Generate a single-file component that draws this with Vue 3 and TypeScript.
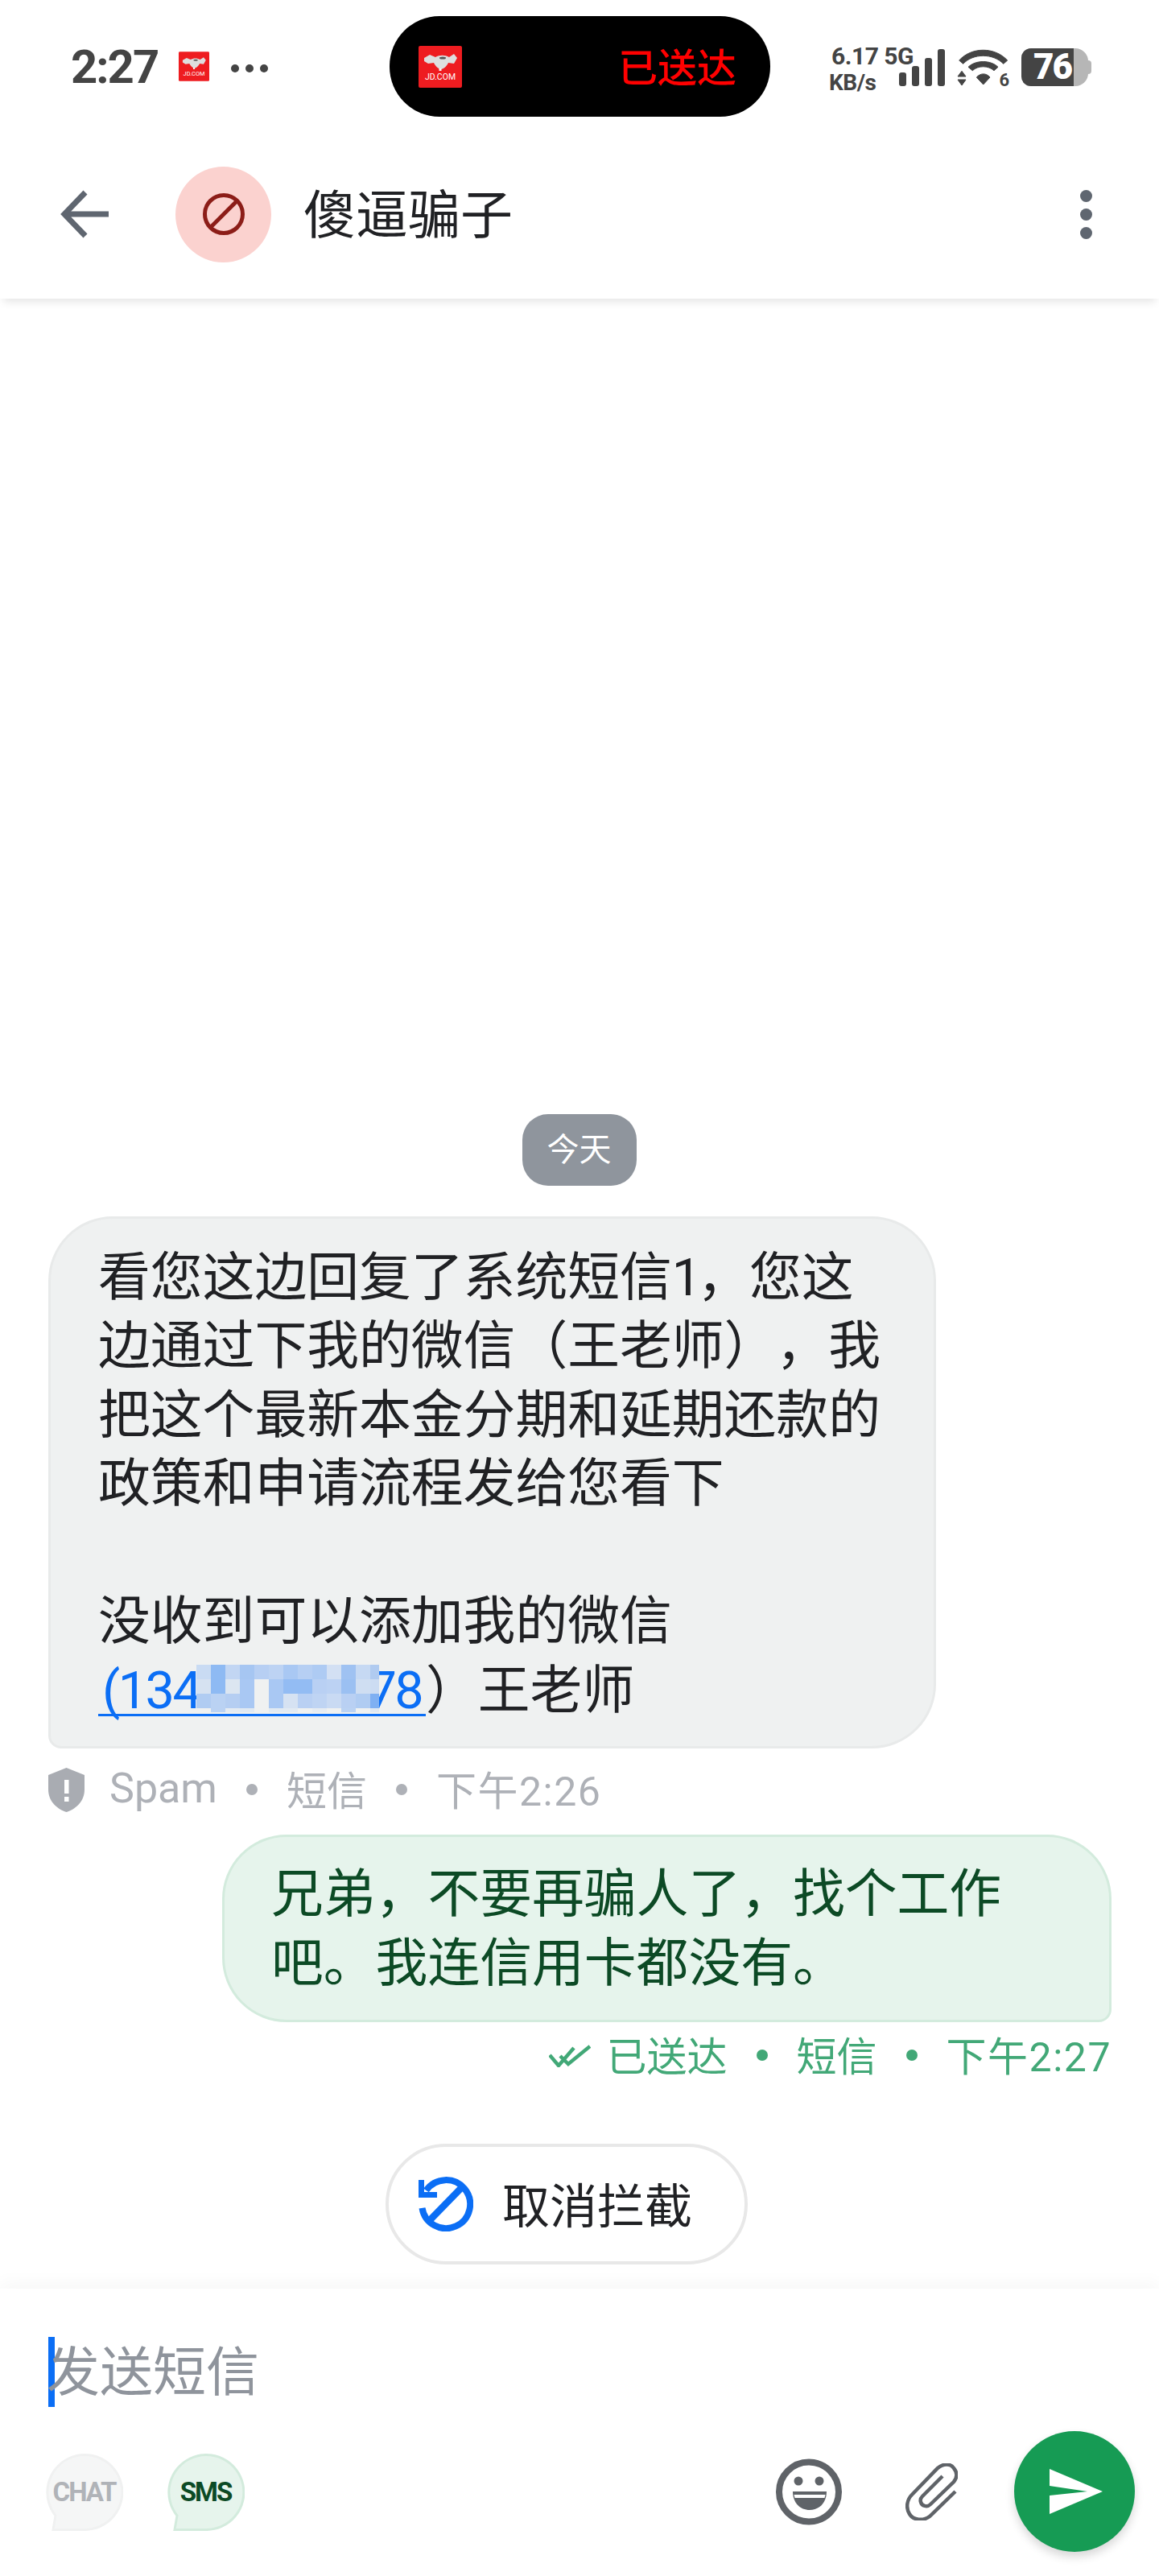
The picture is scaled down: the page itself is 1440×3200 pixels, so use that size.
<script setup lang="ts">
// mosaic over the phone number, one entry per cell
const mosaicCells: string[] = [
  '#c9dbf3', '#8ebaf3', '#c2d6f3', '#a6c6f2', '#b7cff3', '#bdd3f3', '#a9c8f3', '#b6cff3', '#aecbf3', '#d3e0f3', '#9fc2f2', '#c6d9f3', '#b0cbf0',
  '#d6e2f1', '#8ebaf3', '#dce6f1', '#a9c8f3', '#eff1f1', '#a9c8f3', '#93bcf3', '#93bcf3', '#b9d0f3', '#bcd2f3', '#9bc0f2', '#cfdef2', '#ccdcf2',
  '#b0ccf2', '#bad2f3', '#b5cef2', '#a9c8f3', '#eff1f1', '#a9c8f3', '#d6e2f2', '#b9d0f3', '#bfd4f3', '#c9daf3', '#b9d0f3', '#b0ccf2', '#7fb0f2',
  '#eff1f1', '#bad2f3', '#e4ebf2', '#e0e9f2', '#eff1f1', '#e2eaf2', '#e2eaf2', '#eff1f1', '#e6ecf2', '#eff1f1', '#bad2f3', '#eff1f1', '#dfe8f2',
];
</script>

<template>
  <div class="phone">
    <div class="status-bar">
      <div class="status-left">
        <span class="clock">2:27</span>
        <svg class="jd jd-small" viewBox="0 0 54 52">
          <rect width="54" height="52" rx="2" fill="#ee1c20" />
          <path d="M7 15l7-4 7 3c5-3 12-3 17 0l6-4 4 5-4 7-7-1c-2 5-7 8-9 8s-7-3-9-8l-7 1-5-3z" fill="#dedede" />
          <ellipse cx="30" cy="15" rx="4" ry="1.500" fill="#555" />
          <rect x="25.500" y="28" width="3" height="3" fill="#f4f4f4" />
          <text x="27" y="42" text-anchor="middle" class="jd-text">JD.COM</text>
        </svg>
        <span class="more-dots"><i /><i /><i /></span>
      </div>
      <div class="island">
        <svg class="jd jd-big" viewBox="0 0 54 52">
          <rect width="54" height="52" rx="2" fill="#ee1c20" />
          <path d="M7 15l7-4 7 3c5-3 12-3 17 0l6-4 4 5-4 7-7-1c-2 5-7 8-9 8s-7-3-9-8l-7 1-5-3z" fill="#dedede" />
          <ellipse cx="30" cy="15" rx="4" ry="1.500" fill="#555" />
          <rect x="25.500" y="28" width="3" height="3" fill="#f4f4f4" />
          <text x="27" y="42" text-anchor="middle" class="jd-text">JD.COM</text>
        </svg>
        <span class="island-text">已送达</span>
      </div>
      <div class="status-right">
        <div class="speed">
          <span>6.17 5G</span>
          <span class="speed-unit">KB/s</span>
        </div>
        <svg class="signal" width="57" height="46" viewBox="0 0 57 46" fill="#444">
          <rect x="0" y="29" width="9" height="17" rx="3" />
          <rect x="16" y="21" width="9" height="25" rx="3" />
          <rect x="32" y="11" width="9" height="35" rx="3" />
          <rect x="48" y="0" width="9" height="46" rx="3" />
        </svg>
        <div class="wifi">
          <svg width="64" height="48" viewBox="0 0 64 48" fill="#444" stroke="#444" stroke-width="1">
            <path d="M2.700 14C18 -3 47 -3 62.700 14l-5 4.300C45 5 20 5 7.700 18.300z" />
            <path d="M14 22.300c9-9 28-9 37 0l-5 4.400c-7-6.500-20-6.500-26.700 0z" />
            <path d="M24.300 35c5-5.500 12-5.500 16.700 0l-8.300 9z" />
            <path d="M6 27.300L11 34H1zM1 38h10l-5 7z" />
          </svg>
          <span class="wifi-six">6</span>
        </div>
        <div class="battery">
          <div class="battery-fill"><span>76</span></div>
        </div>
      </div>
    </div>

    <header class="app-bar">
      <svg class="back" width="60" height="60" viewBox="0 0 60 60" fill="none" stroke="#5f6670" stroke-width="7">
        <path d="M60 30H6M31 3L5 30l26 27" />
      </svg>
      <div class="avatar">
        <svg width="52" height="52" viewBox="0 0 52 52" fill="none" stroke="#8c1d18" stroke-width="5">
          <circle cx="26" cy="26" r="23.500" />
          <path d="M10 42L42 10" />
        </svg>
      </div>
      <h1 class="title">傻逼骗子</h1>
      <div class="menu"><i /><i /><i /></div>
    </header>

    <main class="thread">
      <div class="day">今天</div>

      <div class="bubble received">
        看您这边回复了系统短信<span class="digit">1</span>，您这<br />
        边通过下我的微信（王老师），我<br />
        把这个最新本金分期和延期还款的<br />
        政策和申请流程发给您看下<br />
        <br />
        没收到可以添加我的微信<br />
        <span class="link">(134<span class="mosaic"><span class="mosaic-grid"><i v-for="(c, i) in mosaicCells" :key="i" :style="{ background: c }" /></span></span>78</span>）王老师
      </div>
      <div class="meta meta-received">
        <svg class="shield" width="45" height="55" viewBox="0 0 45 55">
          <path d="M22.500 0L45 9v18c0 14-10 24-22.500 28C10 51 0 41 0 27V9z" fill="#a9acb2" />
          <rect x="20" y="15" width="5.500" height="17" fill="#fff" />
          <rect x="20" y="36" width="5.500" height="6" fill="#fff" />
        </svg>
        <span class="spam">Spam</span>
        <i class="dot" />
        <span>短信</span>
        <i class="dot" />
        <span class="time">下午2:26</span>
      </div>

      <div class="bubble sent">
        兄弟，不要再骗人了，找个工作<br />
        吧。我连信用卡都没有。
      </div>
      <div class="meta meta-sent">
        <svg class="ticks" width="52" height="29" viewBox="0 0 52 29" fill="none" stroke="#42a877" stroke-width="4.500">
          <path d="M1 14l11 13L31 5M14 15l10 10L51 3" />
        </svg>
        <span>已送达</span>
        <i class="dot" />
        <span>短信</span>
        <i class="dot" />
        <span class="time">下午2:27</span>
      </div>

      <button class="unblock">
        <svg width="68" height="68" viewBox="0 0 68 68" fill="none">
          <path d="M9.500 17A30 30 0 1 1 4.500 38.800" stroke="#0b6ef5" stroke-width="8" />
          <path d="M15 53L53 14" stroke="#0b6ef5" stroke-width="8.500" />
          <path d="M0 4h7v15h16v7H0z" fill="#0b6ef5" />
        </svg>
        <span>取消拦截</span>
      </button>
    </main>

    <footer class="composer">
      <div class="input-row">
        <span class="caret" />
        <span class="placeholder">发送短信</span>
      </div>
      <div class="tools">
        <div class="chip chip-chat">
          <svg width="97" height="97" viewBox="0 0 97 97">
            <path d="M10 95.500L13 78A46.500 46.500 0 1 1 48.500 95.500z" />
          </svg>
          <span>CHAT</span>
        </div>
        <div class="chip chip-sms">
          <svg width="97" height="97" viewBox="0 0 97 97">
            <path d="M10 95.500L13 78A46.500 46.500 0 1 1 48.500 95.500z" />
          </svg>
          <span>SMS</span>
        </div>
        <svg class="smile" width="82" height="83" viewBox="0 0 82 83" fill="#5f6368">
          <circle cx="41" cy="41.500" r="37" fill="none" stroke="#5f6368" stroke-width="8" />
          <circle cx="28" cy="28" r="5.500" />
          <circle cx="54" cy="28" r="5.500" />
          <path d="M21 41h42c0 14-9 23-21 23s-21-9-21-23z" />
          <path d="M22.500 45h39l-1 4h-37z" fill="#fff" />
        </svg>
        <svg class="clip" width="65" height="71" viewBox="0 0 65 71" fill="none" stroke="#5f6368" stroke-width="4.500">
          <path d="M62 35L30 66C22 72 10 71 5 63 0 55 2 45 8 39L40 6C47 0 56 0 60 6c5 6 4 12 0 17L31 51c-4 4-11 2-12-3-1-3 0-5 2-7l25-25" />
        </svg>
        <button class="send">
          <svg width="66" height="56" viewBox="0 0 66 56" fill="#fff">
            <path d="M0 0l66 28L0 56V33l47-5L0 21z" />
          </svg>
        </button>
      </div>
    </footer>
  </div>
</template>

<style>
html,
body {
  background: #fff;
}
</style>

<style scoped>
.phone {
  width: 1440px;
  height: 3200px;
  display: flex;
  flex-direction: column;
  background: #fff;
  font-family: Roboto, "Noto Sans CJK SC", sans-serif;
  color: #202124;
  text-spacing-trim: space-all;
}

.status-bar {
  flex: none;
  height: 161px;
  display: grid;
  grid-template-columns: 484px 473px 1fr;
  padding-top: 20px;
  box-sizing: border-box;
}

.status-left {
  height: 125px;
  padding-left: 88px;
  display: flex;
  align-items: center;
  color: #444;
}

.clock {
  font-size: 58px;
  font-weight: 700;
  letter-spacing: -2px;
  width: 134px;
}

.jd {
  display: block;
  flex: none;
}

.jd-small {
  width: 38px;
  height: 37px;
}

.jd-big {
  width: 54px;
  height: 52px;
}

.jd-text {
  font-family: Roboto, sans-serif;
  font-size: 10.500px;
  fill: #fff;
}

.more-dots {
  margin-left: 27px;
  display: flex;
  gap: 8px;
  margin-top: 4px;
}

.more-dots i {
  width: 10px;
  height: 10px;
  border-radius: 50%;
  background: #444;
}

.island {
  height: 125px;
  background: #000;
  border-radius: 62px;
  display: flex;
  align-items: center;
  justify-content: space-between;
  padding: 0 42px 0 36px;
}

.island-text {
  color: #f00;
  font-size: 49px;
  font-weight: 500;
  margin-bottom: 4px;
}

.status-right {
  height: 125px;
  padding-left: 73px;
  display: flex;
  align-items: flex-start;
  padding-top: 41px;
  box-sizing: border-box;
  color: #444;
}

.speed {
  width: 87px;
  white-space: nowrap;
  display: flex;
  flex-direction: column;
  font-weight: 700;
  font-size: 30px;
  line-height: 33px;
  letter-spacing: -0.500px;
  margin-top: -8px;
}

.speed span:first-child {
  padding-left: 3px;
}

.speed-unit {
  font-size: 28px;
}

.wifi {
  position: relative;
  margin-left: 15px;
}

.wifi-six {
  position: absolute;
  right: -1px;
  top: 25px;
  font-size: 22px;
  line-height: 28px;
  font-weight: 700;
}

.wifi svg {
  display: block;
}

.battery {
  margin-left: 16px;
  width: 83px;
  height: 47px;
  border-radius: 12px 16px 16px 12px;
  background: #b6b6b6;
  margin-top: -1px;
  position: relative;
}

.battery::after {
  content: "";
  position: absolute;
  left: 82px;
  top: 15px;
  width: 5px;
  height: 17px;
  border-radius: 0 4px 4px 0;
  background: #b6b6b6;
}

.battery-fill {
  width: 65px;
  height: 47px;
  background: #444;
  border-radius: 12px 0 0 12px;
  color: #fff;
  font-weight: 900;
  font-size: 44px;
  line-height: 47px;
  text-align: right;
  padding-right: 3px;
  box-sizing: border-box;
  letter-spacing: -2px;
}

.app-bar {
  flex: none;
  height: 210px;
  box-sizing: border-box;
  display: flex;
  align-items: center;
  padding: 0 83px 0 75px;
  position: relative;
  background: #fff;
  box-shadow: 0 8px 10px -4px rgba(0, 0, 0, 0.1);
  z-index: 1;
}

.avatar {
  margin-left: 83px;
  width: 119px;
  height: 119px;
  border-radius: 50%;
  background: #fbd2cf;
  display: flex;
  align-items: center;
  justify-content: center;
}

.title {
  margin: 0 0 8px 40px;
  font-size: 65px;
  font-weight: 400;
  flex: 1;
}

.menu {
  display: flex;
  flex-direction: column;
  gap: 8px;
}

.menu i {
  width: 15px;
  height: 15px;
  border-radius: 50%;
  background: #5f6670;
}

.thread {
  flex: 1;
  display: flex;
  flex-direction: column;
  justify-content: flex-end;
  align-items: flex-start;
  padding: 0 59px 30px 60px;
}

.day {
  align-self: center;
  width: 142px;
  height: 89px;
  line-height: 89px;
  text-align: center;
  border-radius: 32px;
  background: #8f959d;
  color: #fff;
  font-size: 40px;
  margin-bottom: 38px;
  margin-left: -2px;
}

.bubble {
  box-sizing: border-box;
  font-size: 64.800px;
  line-height: 85.500px;
  border-width: 3px;
  border-style: solid;
  white-space: nowrap;
}

.received {
  width: 1103px;
  padding: 31px 40px 26px 59px;
  background: #eff1f1;
  border-color: #e8eaea;
  border-radius: 80px 80px 80px 16px;
}

.digit {
  letter-spacing: -5px;
}

.link {
  display: inline-block;
  height: 71px;
  padding-left: 5px;
  width: 402px;
  color: #0b6ef5;
  border-bottom: 3px solid #0b6ef5;
  letter-spacing: -2.500px;
}

.mosaic {
  display: inline-block;
  position: relative;
  width: 208px;
  height: 0;
}

.mosaic-grid {
  position: absolute;
  left: -4px;
  bottom: -5px;
  display: grid;
  grid-template-columns: repeat(13, 18px);
  grid-template-rows: 18px 18px 18px 5px;
  width: 227px;
  overflow: hidden;
}

.mosaic-grid i {
  display: block;
}

.meta {
  display: flex;
  align-items: center;
  height: 58px;
  font-size: 50px;
  color: #aeb1b7;
  white-space: nowrap;
}

.meta span {
  margin-top: -4px;
}

.meta-received {
  margin-top: 22px;
}

.shield {
  margin-right: 31px;
}

.spam {
  font-size: 52px;
}

.time {
  letter-spacing: 1.500px;
}

.dot {
  width: 14px;
  height: 14px;
  border-radius: 50%;
  background: currentColor;
  margin: 0 36px;
}

.sent {
  align-self: flex-end;
  width: 1105px;
  margin-top: 27px;
  padding: 29px 40px 27px 58px;
  background: #e6f4ec;
  border-color: #d3ebdd;
  border-radius: 80px 80px 16px 80px;
  color: #0c4a25;
}

.meta-sent {
  align-self: flex-end;
  margin-top: 12px;
  color: #42a877;
}

.ticks {
  margin-right: 20px;
}

.unblock {
  margin: 81px 0 0 419px;
  width: 450px;
  height: 150px;
  box-sizing: border-box;
  border: 4px solid #e8e8e8;
  border-radius: 75px;
  background: #fff;
  display: flex;
  align-items: center;
  gap: 36px;
  padding: 0 0 0 37px;
  font-family: inherit;
  font-size: 59px;
  color: #202124;
}

.unblock span {
  margin-bottom: 3px;
}

.composer {
  flex: none;
  height: 357px;
  box-sizing: border-box;
  padding-top: 60px;
  background: #fff;
  box-shadow: 0 -8px 20px rgba(0, 0, 0, 0.03);
}

.input-row {
  display: flex;
  height: 87px;
  padding-left: 60px;
}

.caret {
  width: 8px;
  height: 87px;
  background: #0b6ef5;
}

.placeholder {
  margin-left: -10px;
  font-size: 66px;
  line-height: 90px;
  color: #8f949c;
}

.tools {
  margin-top: 30px;
  height: 150px;
  display: flex;
  align-items: center;
  padding: 0 30px 0 56px;
}

.chip {
  width: 97px;
  height: 97px;
  display: grid;
  place-items: center;
  position: relative;
}

.chip svg {
  position: absolute;
  inset: 0;
  stroke-width: 3;
}

.chip span {
  position: relative;
  font-size: 33px;
  font-weight: 700;
  letter-spacing: -2px;
}

.chip-chat path {
  fill: #f5f6f6;
  stroke: #f0f1f1;
}

.chip-chat span {
  color: #b0b3b8;
}

.chip-sms {
  margin-left: 54px;
}

.chip-sms path {
  fill: #e6f4ec;
  stroke: #d3ebdd;
}

.chip-sms span {
  color: #0c4a25;
}

.smile {
  margin-left: auto;
}

.clip {
  margin-left: 79px;
}

.send {
  margin-left: 70px;
  width: 150px;
  height: 150px;
  border: 0;
  padding: 0 0 0 4px;
  border-radius: 50%;
  background: #169b54;
  box-shadow: 0 6px 12px rgba(0, 0, 0, 0.16);
  display: flex;
  align-items: center;
  justify-content: center;
}
</style>
